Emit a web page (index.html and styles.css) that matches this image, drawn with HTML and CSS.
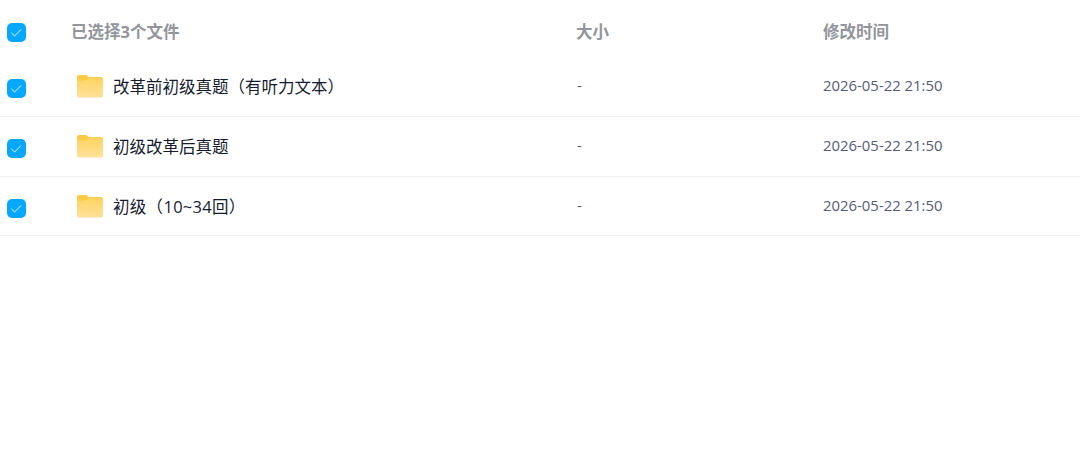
FILE: index.html
```html
<!DOCTYPE html>
<html lang="zh-CN">
  <head>
    <meta charset="UTF-8" />
    <meta name="viewport" content="width=device-width, initial-scale=1.0" />
    <title>文件列表</title>
    <link rel="stylesheet" href="styles.css">
  </head>
  <body>
    <svg class="defs" width="0" height="0">
      <defs>
        <linearGradient id="folder-front" x1="0" y1="0" x2="0" y2="1">
          <stop offset="0" stop-color="#ffd460" />
          <stop offset="1" stop-color="#ffe09a" />
        </linearGradient>
        <symbol id="check" viewBox="0 0 19 19">
          <path d="M4.300 9.800l3.400 3.200 6.300-6.500" fill="none" stroke="#dff4ff" stroke-width="1" />
        </symbol>
        <symbol id="folder" viewBox="0 0 26 23">
          <path d="M0 2a2 2 0 0 1 2-2h6.500q1 0 1.800.7l1.400 1.400H24a2 2 0 0 1 2 2V9H0z" fill="#fbcb45" />
          <path d="M0 7.500a2 2 0 0 1 2-2h5.500q1.200 0 2.200-.8l1.600-1.300q.8-.7 1.900-.7H24a2 2 0 0 1 2 2v15.800a2 2 0 0 1-2 2H2a2 2 0 0 1-2-2z" fill="url(#folder-front)" />
        </symbol>
      </defs>
    </svg>

    <div class="file-list">
      <div class="row head">
        <span class="checkbox"><svg><use href="#check" /></svg></span>
        <span class="title">已选择3个文件</span>
        <span>大小</span>
        <span>修改时间</span>
      </div>
      <div class="row">
        <span class="checkbox"><svg><use href="#check" /></svg></span>
        <div class="name">
          <svg class="folder"><use href="#folder" /></svg>
          <span>改革前初级真题（有听力文本）</span>
        </div>
        <span class="size">-</span>
        <span class="time">2026-05-22 21:50</span>
      </div>
      <div class="row">
        <span class="checkbox"><svg><use href="#check" /></svg></span>
        <div class="name">
          <svg class="folder"><use href="#folder" /></svg>
          <span>初级改革后真题</span>
        </div>
        <span class="size">-</span>
        <span class="time">2026-05-22 21:50</span>
      </div>
      <div class="row">
        <span class="checkbox"><svg><use href="#check" /></svg></span>
        <div class="name">
          <svg class="folder"><use href="#folder" /></svg>
          <span class="latin">初级（10~34回）</span>
        </div>
        <span class="size">-</span>
        <span class="time">2026-05-22 21:50</span>
      </div>
    </div>
  </body>
</html>
```

FILE: styles.css
```css
body {
  margin: 0;
  background: #fff;
  font-family: "Open Sans", "Noto Sans CJK SC", sans-serif;
}
.defs {
  display: block;
}
.row {
  display: grid;
  grid-template-columns: 71px 505px 247px 1fr;
  align-items: center;
  height: 59px;
  border-bottom: 1px solid #f1f2f4;
  white-space: nowrap;
}
.row:last-child {
  height: 58px;
}
.head {
  box-sizing: border-box;
  height: 57px;
  padding-top: 5px;
  border-bottom: 0;
  color: #92959b;
  font-size: 16.500px;
  font-weight: 700;
}
.checkbox {
  width: 19px;
  height: 19px;
  margin: 4px 0 0 6.500px;
  border-radius: 5px;
  background: #06a7ff;
}
.head .checkbox {
  margin-top: 3px;
}
.checkbox svg {
  display: block;
  width: 19px;
  height: 19px;
}
.name {
  display: flex;
  align-items: center;
  padding-left: 6px;
  color: #151b30;
  font-size: 16.500px;
}
.name span {
  padding-bottom: 2px;
}
.row:last-child .name span {
  padding-bottom: 0;
}
.name .latin {
  letter-spacing: 0.3px;
}
.folder {
  width: 26px;
  height: 23px;
  margin-right: 10px;
}
.size,
.time {
  padding-bottom: 3px;
  color: #545c78;
  font-size: 14.900px;
}
.row:last-child .size,
.row:last-child .time {
  padding-bottom: 2px;
}
.size {
  padding-left: 1px;
}
```
